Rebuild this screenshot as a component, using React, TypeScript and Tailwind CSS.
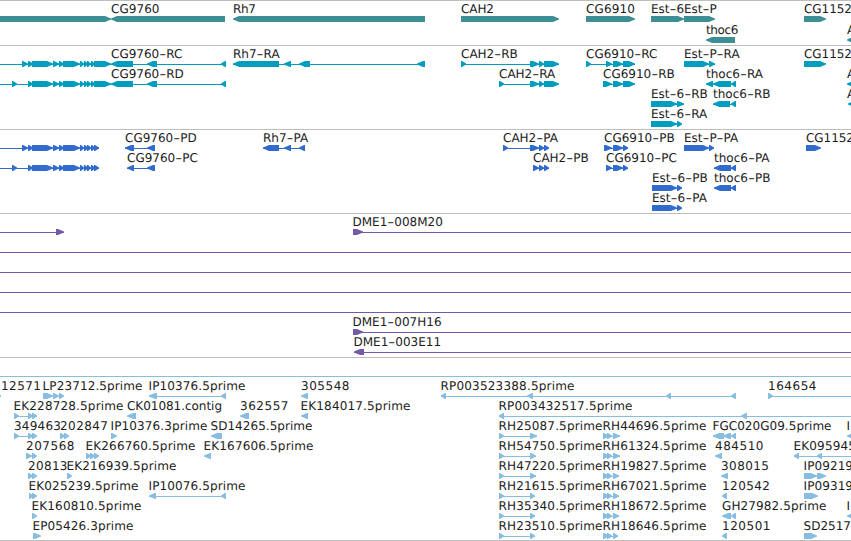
import React from "react";

type Exon = [start: number, end: number, dir?: "l"];
type Label = [text: string, x: number, end: number, row: number];
type Line = [start: number, end: number, row: number];
type Track = {
  height: string;
  h: number;
  color: string;
  // y of the first row of glyphs, measured from the top of the track
  first: number;
  step: number;
  overview?: boolean;
  labels: Label[];
  lines: Line[];
  exons: Exon[][];
};

const L = "l" as const;

const genes: Track = {
  height: "h-[45px]",
  h: 45,
  color: "#3d8e95",
  first: 16,
  step: 21,
  labels: [
    ["CG9760", 111, 159.5, 0],
    ["Rh7", 233, 256, 0],
    ["CAH2", 461, 494, 0],
    ["CG6910", 586, 635, 0],
    ["Est-6", 651, 683, 0],
    ["Est-P", 684, 715, 0],
    ["CG1152", 804, 852, 0],
    ["thoc6", 706, 738.5, 1],
    ["A", 847, 856, 1],
  ],
  lines: [],
  exons: [
    [[-5, 111], [111, 225, L], [233, 425, L], [461, 559], [586, 635], [651, 684], [684, 715], [804, 826]],
    [[706, 735, L], [847, 860, L]],
  ],
};

const upstream: Exon[] = [[28, 33], [32, 53], [53, 59], [59, 64], [63, 80], [80, 84], [84, 88], [87, 91]];

const transcripts: Track = {
  height: "h-[84px]",
  h: 84,
  color: "#009dbf",
  first: 16,
  step: 20,
  labels: [
    ["CG9760-RC", 111, 183, 0],
    ["Rh7-RA", 233, 280, 0],
    ["CAH2-RB", 461, 516, 0],
    ["CG6910-RC", 586, 658, 0],
    ["Est-P-RA", 684, 739.5, 0],
    ["CG1152", 804, 852, 0],
    ["CG9760-RD", 111, 184, 1],
    ["CAH2-RA", 499, 556.5, 1],
    ["CG6910-RB", 603, 674, 1],
    ["thoc6-RA", 706, 762.5, 1],
    ["A", 847, 856, 1],
    ["Est-6-RB", 651, 705, 2],
    ["thoc6-RB", 713, 767, 2],
    ["A", 847, 856, 2],
    ["Est-6-RA", 651, 707.5, 3],
  ],
  lines: [
    [0, 226, 0], [233, 425, 0], [461, 559, 0], [586, 635, 0], [684, 715, 0],
    [0, 226, 1], [499, 559, 1], [603, 635, 1], [706, 736, 1],
    [651, 684, 2], [713, 736, 2], [651, 682, 3],
  ],
  exons: [
    [[22, 28], ...upstream, [91, 95], [94, 111], [111, 133, L], [147, 157, L], [221, 226, L],
      [233, 279, L], [284, 291, L], [299, 310, L], [417, 425, L],
      [461, 466], [530, 539], [539, 544], [544, 559],
      [586, 591], [606, 612], [613, 623], [623, 635], [684, 709], [709, 715], [804, 826]],
    [[12, 17], ...upstream, [91, 95], [94, 111], [111, 133, L], [147, 157, L], [221, 226, L],
      [499, 504], [530, 539], [539, 544], [544, 559],
      [603, 612], [613, 623], [623, 635], [706, 713, L], [713, 731, L], [731, 736, L], [847, 860, L]],
    [[651, 677], [677, 684], [713, 730, L], [731, 736, L], [848, 860, L]],
    [[651, 677], [677, 682]],
  ],
};

const proteins: Track = {
  height: "h-[84px]",
  h: 84,
  color: "#316bcd",
  first: 16,
  step: 20,
  labels: [
    ["CG9760-PD", 125, 196.5, 0],
    ["Rh7-PA", 263, 309, 0],
    ["CAH2-PA", 503, 559, 0],
    ["CG6910-PB", 604, 674, 0],
    ["Est-P-PA", 684, 738, 0],
    ["CG1152", 806, 854, 0],
    ["CG9760-PC", 127, 198, 1],
    ["CAH2-PB", 533, 587.5, 1],
    ["CG6910-PC", 606, 677, 1],
    ["thoc6-PA", 714, 769.5, 1],
    ["Est-6-PB", 652, 705, 2],
    ["thoc6-PB", 714, 767, 2],
    ["Est-6-PA", 652, 707, 3],
  ],
  lines: [
    [0, 99, 0], [125, 155, 0], [263, 305, 0], [503, 549, 0], [604, 628, 0], [684, 714, 0],
    [0, 99, 1], [127, 155, 1], [533, 549, 1], [606, 628, 1], [714, 736, 1],
    [652, 682, 2], [714, 736, 2], [652, 682, 3],
  ],
  exons: [
    [[22, 28], ...upstream, [91, 95], [94, 99], [125, 134, L], [147, 155, L],
      [263, 279, L], [284, 291, L], [299, 305, L],
      [503, 508], [530, 539], [539, 544], [544, 549],
      [604, 612], [613, 623], [623, 628], [684, 709], [709, 714], [806, 821]],
    [[12, 17], ...upstream, [91, 95], [94, 99], [127, 134, L], [147, 155, L],
      [533, 539], [539, 544], [544, 549], [606, 612], [613, 623], [623, 628],
      [714, 731, L], [731, 736, L]],
    [[652, 677], [677, 682], [714, 731, L], [731, 736, L]],
    [[652, 677], [677, 682]],
  ],
};

const bacs: Track = {
  height: "h-[144px]",
  h: 144,
  color: "#7459a8",
  first: 16,
  step: 20,
  labels: [
    ["DME1-008M20", 352.5, 444, 0],
    ["DME1-007H16", 352.5, 443, 5],
    ["DME1-003E11", 353.5, 442, 6],
  ],
  lines: [
    [0, 64, 0], [353, 851, 0], [0, 851, 1], [0, 851, 2], [0, 851, 3], [0, 851, 4],
    [353, 851, 5], [354, 851, 6],
  ],
  exons: [[[56, 64], [353, 363]], [], [], [], [], [[353, 363]], [[354, 364, L]]],
};

const rhExons: Exon[] = [[603, 609], [607, 612]];

const ests: Track = {
  height: "h-[184px]",
  h: 184,
  color: "#87bde0",
  first: 36,
  step: 20,
  overview: true,
  labels: [
    ["12571", 1, 41, 0],
    ["LP23712.5prime", 42.5, 142.5, 0],
    ["IP10376.5prime", 148.5, 245.5, 0],
    ["305548", 301, 349.5, 0],
    ["RP003523388.5prime", 440.5, 574.5, 0],
    ["164654", 768, 816.5, 0],
    ["EK228728.5prime", 13.5, 123.5, 1],
    ["CK01081.contig", 127, 222, 1],
    ["362557", 240, 288.5, 1],
    ["EK184017.5prime", 300.5, 410.5, 1],
    ["RP003432517.5prime", 498.5, 632.5, 1],
    ["349463", 14, 61, 2],
    ["202847", 60, 108, 2],
    ["IP10376.3prime", 110.5, 207.5, 2],
    ["SD14265.5prime", 210.5, 312.5, 2],
    ["RH25087.5prime", 498.5, 602.5, 2],
    ["RH44696.5prime", 602.5, 706.5, 2],
    ["FGC020G09.5prime", 712.5, 831.5, 2],
    ["I", 846.5, 850, 2],
    ["207568", 26, 74.5, 3],
    ["EK266760.5prime", 85.5, 195.5, 3],
    ["EK167606.5prime", 203.5, 313.5, 3],
    ["RH54750.5prime", 498.5, 602.5, 3],
    ["RH61324.5prime", 602.5, 706.5, 3],
    ["484510", 715, 763.5, 3],
    ["EK095945", 793.5, 856, 3],
    ["20813", 28, 67.5, 4],
    ["EK216939.5prime", 66.5, 176.5, 4],
    ["RH47220.5prime", 498.5, 602.5, 4],
    ["RH19827.5prime", 602.5, 706.5, 4],
    ["308015", 721, 769, 4],
    ["IP09219", 803.5, 853, 4],
    ["EK025239.5prime", 28.5, 138.5, 5],
    ["IP10076.5prime", 148.5, 245.5, 5],
    ["RH21615.5prime", 498.5, 602.5, 5],
    ["RH67021.5prime", 602.5, 706.5, 5],
    ["120542", 722, 770, 5],
    ["IP09319", 803.5, 853, 5],
    ["EK160810.5prime", 31.5, 141.5, 6],
    ["RH35340.5prime", 498.5, 602.5, 6],
    ["RH18672.5prime", 602.5, 706.5, 6],
    ["GH27982.5prime", 722, 826.5, 6],
    ["I", 846.5, 850, 6],
    ["EP05426.3prime", 32.5, 133.5, 7],
    ["RH23510.5prime", 498.5, 602.5, 7],
    ["RH18646.5prime", 602.5, 706.5, 7],
    ["120501", 722, 770.5, 7],
    ["SD2517", 803.5, 851, 7],
  ],
  lines: [
    [149, 226, 0], [441, 736, 0], [768, 851, 0],
    [14, 37, 1], [499, 851, 1],
    [14, 37, 2], [499, 537, 2], [603, 620, 2], [713, 736, 2],
    [499, 536, 3], [603, 620, 3], [794, 851, 3],
    [499, 536, 4], [603, 619, 4],
    [149, 226, 5], [499, 535, 5], [603, 619, 5],
    [499, 535, 6], [603, 619, 6],
    [499, 535, 7], [603, 618, 7],
  ],
  exons: [
    [[-4, 1], [43, 53], [53, 59], [59, 64], [149, 157, L], [221, 226, L], [301, 308, L],
      [441, 446, L], [527, 533, L], [666, 671, L], [731, 736, L], [768, 773]],
    [[14, 19], [28, 33], [32, 37], [127, 136, L], [240, 249, L], [301, 308, L], [499, 504, L], [741, 747, L]],
    [[14, 19], [28, 33], [32, 37], [60, 65], [64, 69], [111, 117], [211, 222, L],
      [499, 504], [530, 537], ...rhExons, [613, 620], [713, 724, L], [723, 731, L], [731, 736, L], [847, 858, L]],
    [[26, 32], [32, 37], [86, 91], [90, 95], [94, 99], [204, 211, L],
      [499, 504], [530, 536], ...rhExons, [613, 620], [715, 722, L], [794, 799, L], [817, 822, L]],
    [[28, 33], [32, 37], [67, 72], [499, 504], [530, 536], ...rhExons, [613, 619], [721, 728, L], [804, 817], [817, 826]],
    [[29, 33], [32, 37], [149, 156, L], [221, 226, L], [499, 504], [530, 535], ...rhExons, [613, 619], [722, 727, L], [804, 818]],
    [[32, 37], [499, 504], [530, 535], ...rhExons, [613, 619], [722, 731, L], [731, 736, L], [847, 858, L]],
    [[33, 41], [499, 504], [530, 535], ...rhExons, [613, 618], [722, 727, L], [804, 817]],
  ],
};

// A block whose leading end tapers to a blunt point in its direction of transcription.
function exonPath([start, end, dir]: Exon, y: number) {
  const w = end - start;
  const head = w <= 7 ? w - 1 : 6;
  const flat = w - head;
  return dir === "l"
    ? `M${end} ${y}H${end - flat}L${start} ${y + 2.4}V${y + 3.6}L${end - flat} ${y + 6}H${end}Z`
    : `M${start} ${y}H${start + flat}L${end} ${y + 2.4}V${y + 3.6}L${start + flat} ${y + 6}H${start}Z`;
}

function FeatureLabel({ label: [text, x, end], y }: { label: Label; y: number }) {
  const parts = text.split("-");
  if (parts.length === 1) {
    return (
      <text x={x} y={y} textLength={end - x}>
        {text}
      </text>
    );
  }
  return (
    <text x={x} y={y}>
      {parts.map((part, i) => (
        <React.Fragment key={i}>
          {i > 0 && (
            <tspan textLength={7} lengthAdjust="spacingAndGlyphs">
              -
            </tspan>
          )}
          <tspan>{part}</tspan>
        </React.Fragment>
      ))}
    </text>
  );
}

function TrackPanel({ track }: { track: Track }) {
  const rowY = (row: number) => track.first + row * track.step;
  return (
    <section className={`w-full shrink-0 overflow-hidden border-t border-[#bebebe] ${track.height}`}>
      <svg width="851" height={track.h - 1} viewBox={`0 1 851 ${track.h - 1}`} className="block">
        {track.overview && <rect x="0" y="19" width="851" height="1" fill={track.color} />}
        <g fill={track.color} shapeRendering="crispEdges">
          {track.lines.map(([a, b, row], i) => (
            <rect key={i} x={a} y={rowY(row) + 3} width={b - a} height="1" />
          ))}
        </g>
        <g fill={track.color}>
          {track.exons.map((row, r) => row.map((e, i) => <path key={`${r}-${i}`} d={exonPath(e, rowY(r))} />))}
        </g>
        <g fill="#1c1c1c" fontSize="12" fontFamily="'DejaVu Sans', sans-serif" textRendering="geometricPrecision">
          {track.labels.map((label, i) => (
            <FeatureLabel key={i} label={label} y={rowY(label[3]) - 3} />
          ))}
        </g>
      </svg>
    </section>
  );
}

export default function App() {
  return (
    <main className="flex h-[541px] w-[851px] flex-col overflow-hidden border-b border-[#bebebe] bg-white">
      {[genes, transcripts, proteins, bacs].map((t) => (
        <TrackPanel key={t.color} track={t} />
      ))}
      <TrackPanel track={ests} />
    </main>
  );
}
